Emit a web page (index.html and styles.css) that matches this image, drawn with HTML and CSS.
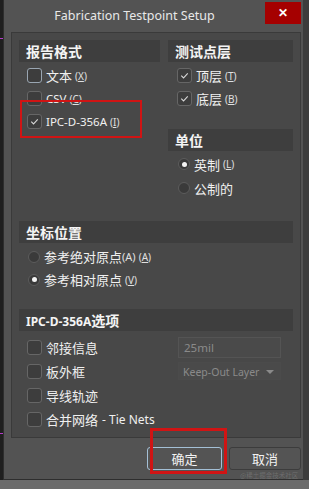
FILE: index.html
```html
<!DOCTYPE html>
<html lang="zh-CN">
<head>
    <meta charset="UTF-8">
    <meta name="viewport" content="width=device-width, initial-scale=1.0">
    <title>Fabrication Testpoint Setup</title>
    <link rel="stylesheet" href="styles.css">
</head>
<body>
    <div class="screen">
        <div class="edge-left"><span class="mark mark-top"></span><span class="mark mark-bottom"></span></div>

        <div class="window">
            <div class="titlebar">
                <div class="title">Fabrication Testpoint Setup</div>
                <div class="close">&#x2715;</div>
            </div>

            <div class="panel">
                <div class="top-grid">
                    <div class="col col-left">
                        <div class="header">报告格式</div>
                        <div class="list">
                            <div class="opt"><span class="box focus"></span>文本 <span class="key">(<u>X</u>)</span></div>
                            <div class="opt"><span class="box"></span><span class="latin">CSV</span> <span class="key">(<u>C</u>)</span></div>
                            <div class="opt"><span class="box"><svg viewBox="0 0 16 16"><path d="M4 8.2l2.8 2.8 5.2-5.6"/></svg></span><span class="latin">IPC-D-356A</span> <span class="key">(<u>I</u>)</span></div>
                        </div>
                    </div>

                    <div class="col col-right">
                        <div class="header">测试点层</div>
                        <div class="list">
                            <div class="opt"><span class="box"><svg viewBox="0 0 16 16"><path d="M4 8.2l2.8 2.8 5.2-5.6"/></svg></span>顶层 <span class="key">(<u>T</u>)</span></div>
                            <div class="opt"><span class="box"><svg viewBox="0 0 16 16"><path d="M4 8.2l2.8 2.8 5.2-5.6"/></svg></span>底层 <span class="key">(<u>B</u>)</span></div>
                        </div>

                        <div class="header unit">单位</div>
                        <div class="list radios">
                            <div class="opt"><span class="radio on"></span>英制 <span class="key">(<u>L</u>)</span></div>
                            <div class="opt"><span class="radio"></span>公制的</div>
                        </div>
                    </div>
                </div>

                <div class="section origin">
                    <div class="header">坐标位置</div>
                    <div class="list">
                        <div class="opt"><span class="radio"></span>参考绝对原点<span class="key tight">(A)</span><span class="key">(<u>A</u>)</span></div>
                        <div class="opt"><span class="radio on"></span>参考相对原点 <span class="key">(<u>V</u>)</span></div>
                    </div>
                </div>

                <div class="section ipc">
                    <div class="header"><span class="latin">IPC-D-356A</span>选项</div>
                    <div class="list">
                        <div class="row">
                            <div class="opt"><span class="box"></span>邻接信息</div>
                            <div class="field">25mil</div>
                        </div>
                        <div class="row">
                            <div class="opt"><span class="box"></span>板外框</div>
                            <div class="field select">Keep-Out Layer<span class="arrow"></span></div>
                        </div>
                        <div class="row">
                            <div class="opt"><span class="box"></span>导线轨迹</div>
                        </div>
                        <div class="row">
                            <div class="opt"><span class="box"></span>合并网络 <span class="latin nets">- Tie Nets</span></div>
                        </div>
                    </div>
                </div>
            </div>

            <div class="footer">
                <button class="btn ok">确定</button>
                <button class="btn cancel">取消</button>
            </div>
        </div>

        <div class="edge-right"></div>

        <div class="callout callout-ipc"></div>
        <div class="callout callout-ok"></div>
        <div class="watermark">@稀土掘金技术社区</div>
    </div>
</body>
</html>
```

FILE: styles.css
```css
body {
    margin: 0;
    background-color: #6b6b6b;
    font-family: "Noto Sans", "Noto Sans CJK SC", sans-serif;
    color: #f0f0f0;
}
.screen {
    position: relative;
    display: flex;
    height: 480px;
    width: 309px;
}
.edge-left {
    position: relative;
    width: 3px;
    background-color: #1f1f1f;
}
.mark {
    position: absolute;
    left: 0;
    width: 3px;
    height: 1px;
    background-color: #b43cc8;
}
.mark-top { top: 38px; }
.mark-bottom { top: 433px; }
.edge-right {
    flex: 1;
    background-color: #3c3c3c;
}
.window {
    width: 300px;
    box-sizing: border-box;
    background-color: #535353;
    border-left: 1px solid #2e2e2e;
    border-bottom: 1px solid #2e2e2e;
}
.titlebar {
    display: flex;
    height: 32px;
}
.title {
    flex: 1;
    text-align: center;
    font-size: 12.5px;
    line-height: 32px;
    color: #e8e8e8;
}
.close {
    width: 36px;
    height: 22px;
    margin: 2px 2px 0 0;
    background-color: #a50000;
    color: #fff;
    font-size: 12px;
    font-weight: bold;
    line-height: 22px;
    text-align: center;
}
.panel {
    box-sizing: border-box;
    height: 406px;
    margin: 0 2px 0 7px;
    padding: 7px;
    background-color: #484848;
    border: 1px solid #3a3a3a;
}
.top-grid {
    display: grid;
    grid-template-columns: 141px 125px;
    column-gap: 8px;
}
.header {
    height: 22px;
    line-height: 22px;
    padding-left: 7px;
    background-color: #3e3e3e;
    font-family: "Noto Sans CJK SC", sans-serif;
    font-size: 14px;
    font-weight: bold;
    color: #f4f4f4;
}
.header .latin {
    font-family: "Noto Sans", sans-serif;
    font-size: 12px;
}
.list {
    margin-top: 2px;
}
.opt {
    display: flex;
    align-items: center;
    height: 23px;
    padding-left: 8px;
    font-family: "Noto Sans CJK SC", sans-serif;
    font-size: 13px;
    white-space: nowrap;
}
.opt .latin {
    font-family: "Noto Sans", sans-serif;
    font-size: 11.5px;
}
.opt .nets {
    margin-left: 4px;
    font-size: 12px;
}
.col-right .opt {
    padding-left: 9px;
}
.key {
    font-family: "Noto Sans", sans-serif;
    font-size: 10px;
    margin-left: 3px;
    color: #e0e0e0;
}
.key.tight {
    margin-left: 0;
    font-size: 11px;
}
.box {
    box-sizing: border-box;
    width: 15px;
    height: 15px;
    margin-right: 4px;
    border: 1px solid #666;
    border-radius: 3px;
    background-color: #3d3d3d;
}
.box.focus {
    border-color: #9aa6b2;
}
.box svg {
    display: block;
    width: 13px;
    height: 13px;
    fill: none;
    stroke: #d8d8d8;
    stroke-width: 1.3;
}
.radio {
    box-sizing: border-box;
    width: 12px;
    height: 12px;
    margin: 0 4px 0 1px;
    border: 1px solid #5c5c5c;
    border-radius: 50%;
    background-color: #3a3a3a;
    position: relative;
}
.radio.on::after {
    content: "";
    position: absolute;
    left: 2.5px;
    top: 2.5px;
    width: 5px;
    height: 5px;
    border-radius: 50%;
    background-color: #f4f4f4;
}
.unit {
    margin-top: 19px;
}
.radios {
    margin-top: 1px;
}
.radios .opt {
    height: 24px;
}
.origin {
    margin-top: 21px;
}
.ipc {
    margin-top: 18px;
}
.ipc .list {
    margin-top: 4px;
}
.row {
    display: grid;
    grid-template-columns: 159px 103px;
    align-items: center;
    height: 24px;
}
.field {
    box-sizing: border-box;
    height: 21px;
    line-height: 19px;
    padding-left: 5px;
    border: 1px solid #545454;
    background-color: #4a4a4a;
    color: #8a8a8a;
    font-size: 11.5px;
}
.field.select {
    position: relative;
    height: 18px;
    line-height: 18px;
    padding-left: 4px;
    border-color: #4b4b4b;
    font-size: 10.5px;
    white-space: nowrap;
}
.arrow {
    position: absolute;
    right: 6px;
    top: 7px;
    border-left: 4px solid transparent;
    border-right: 4px solid transparent;
    border-top: 4px solid #8a8a8a;
}
.footer {
    display: flex;
    justify-content: flex-end;
    gap: 7px;
    padding: 9px 2px 0 0;
}
.btn {
    height: 23px;
    border: 1px solid #3c3c3c;
    border-radius: 3px;
    background-color: #545454;
    color: #f2f2f2;
    font-family: "Noto Sans CJK SC", sans-serif;
    font-size: 13px;
    padding: 0;
}
.ok {
    width: 75px;
    border-color: #a4c0d6;
}
.cancel {
    width: 72px;
}
.callout {
    position: absolute;
    box-sizing: border-box;
    border: 2px solid #d01414;
}
.callout-ipc {
    left: 20px;
    top: 100px;
    width: 122px;
    height: 38px;
}
.callout-ok {
    left: 150px;
    top: 428px;
    width: 77px;
    height: 46px;
    border-width: 3px;
}
.watermark {
    position: absolute;
    left: 240px;
    top: 472px;
    font-family: "Noto Sans CJK SC", sans-serif;
    font-size: 6.5px;
    line-height: 7px;
    white-space: nowrap;
    color: rgba(255, 255, 255, 0.16);
}
```
